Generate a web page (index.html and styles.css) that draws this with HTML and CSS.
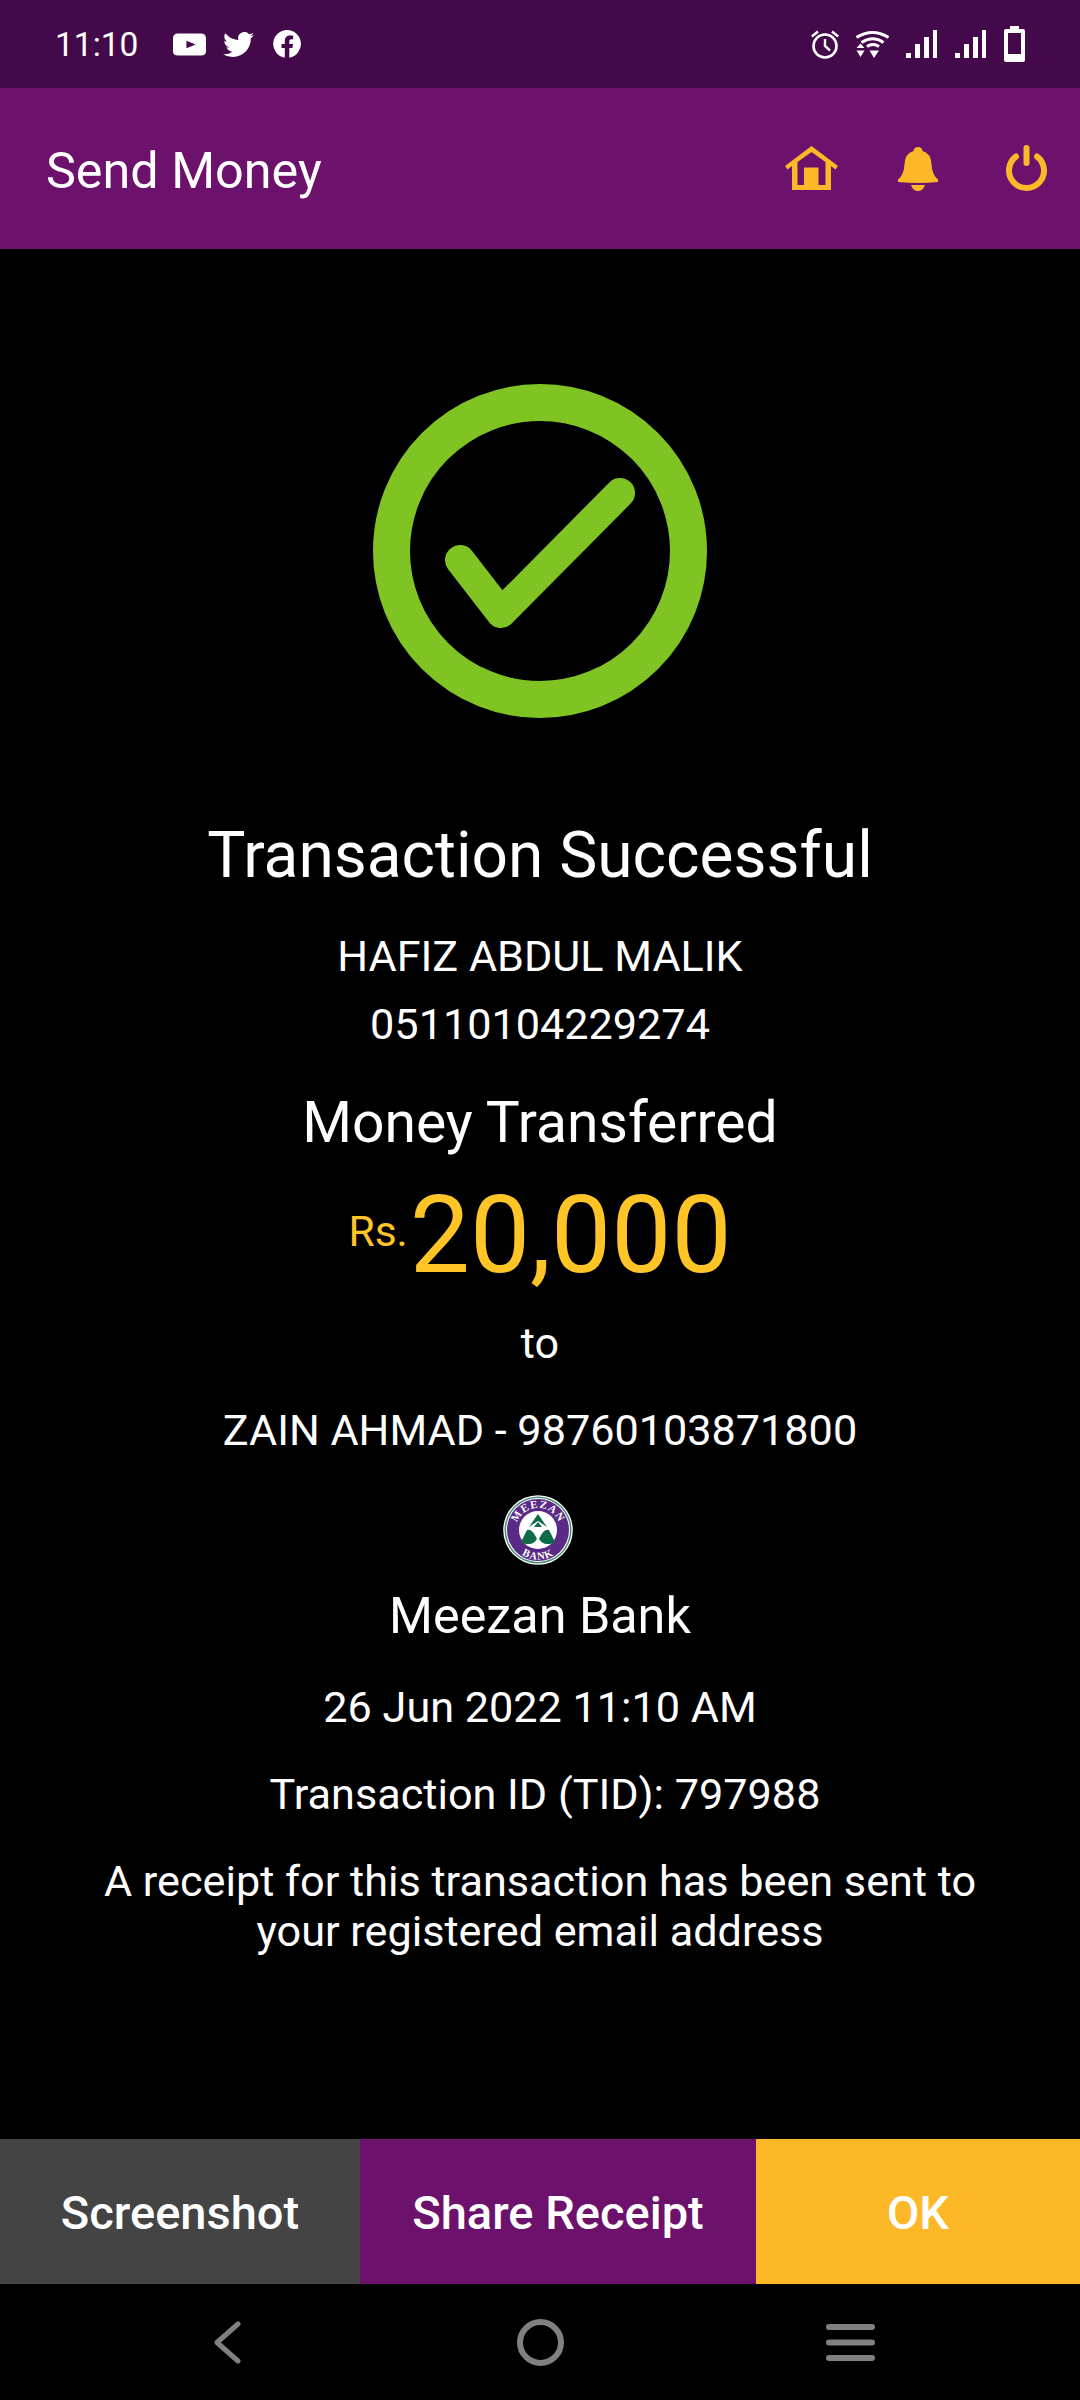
FILE: index.html
```html
<!DOCTYPE html>
<html lang="en">
<head>
<meta charset="utf-8">
<title>Send Money</title>
<link rel="stylesheet" href="styles.css">
</head>
<body>
<div class="phone">
  <header class="status">
    <div class="status-left">
      <span class="clock">11:10</span>
      <svg class="s-yt" viewBox="0 0 32 24" preserveAspectRatio="none"><path fill="#fff" d="M5 0.5H27Q32 0.5 32 5.5V19Q32 23.5 27 23.5H5Q0 23.5 0 19V5.5Q0 0.5 5 0.5Z"/><path fill="#43094a" d="M13 8L22 12L13 16Z"/></svg>
      <svg class="s-tw" viewBox="0 2.200 24 19.600" preserveAspectRatio="none"><path fill="#fff" d="M24 4.600c-.9.400-1.800.700-2.800.800 1-.600 1.800-1.600 2.200-2.700-1 .600-2 1-3.100 1.200A4.900 4.900 0 0 0 11.900 8.400C7.800 8.200 4.200 6.200 1.700 3.200c-1.300 2.300-.7 5.200 1.500 6.600-.8 0-1.600-.2-2.200-.6 0 2.400 1.700 4.400 3.900 4.900-.7.200-1.500.2-2.200.1.600 2 2.400 3.400 4.600 3.400A9.900 9.900 0 0 1 0 19.600 14 14 0 0 0 7.500 21.800c9.100 0 14.300-7.700 14-14.600 1-.7 1.800-1.600 2.500-2.600z"/></svg>
      <svg class="s-fb" viewBox="0 0 28 28"><path fill="#fff" d="M14 0a14 14 0 0 0-2.200 27.800V18H8.500v-4h3.300v-3c0-3.500 2.100-5.400 5.300-5.400 1.500 0 3.100.3 3.100.3v3.400h-1.700c-1.700 0-2.200 1-2.200 2.100V14h3.700l-.6 4h-3.100v9.800A14 14 0 0 0 14 0z"/></svg>
    </div>
    <div class="status-right">
      <svg class="s-alarm" viewBox="0 0 28 29"><circle cx="14" cy="16" r="11.500" fill="none" stroke="#fff" stroke-width="2.600"/><path fill="none" stroke="#fff" stroke-width="2.400" d="M14 9V16L19 20.500M0.800 6.500L7 1.500M27.200 6.500L21 1.500"/></svg>
      <svg class="s-wifi" viewBox="0 0 33 28"><path fill="none" stroke="#fff" stroke-width="3" d="M0.500 7.500Q16.500 -2.500 32.500 7.500M5.500 12.500Q17 5 27.500 12.500M11 16.500Q17 12.500 23 16.500"/><path fill="#fff" d="M13.500 20.500H23L18 28ZM0.500 18L4.500 13.500L8.500 18ZM0.500 20.500H8.500L4.500 27Z"/></svg>
      <svg class="s-sig" viewBox="0 0 31 28"><path fill="#fff" d="M0 23H5V28H0ZM9 14H14V28H9ZM18 7H23V28H18ZM27 0H31V28H27Z"/></svg>
      <svg class="s-sig s-sig-last" viewBox="0 0 31 28"><path fill="#fff" d="M0 23H5V28H0ZM9 14H14V28H9ZM18 7H23V28H18ZM27 0H31V28H27Z"/></svg>
      <svg class="s-bat" viewBox="0 0 21 36"><path fill="#fff" fill-rule="evenodd" d="M6 0H15V3H19Q21 3 21 5V34Q21 36 19 36H2Q0 36 0 34V5Q0 3 2 3H6ZM4 7V28H17V7Z"/></svg>
    </div>
  </header>

  <nav class="appbar">
    <h1 class="appbar-title">Send Money</h1>
    <div class="appbar-icons">
      <svg class="a-home" viewBox="0 0 53 45"><path fill="#fdb827" fill-rule="evenodd" d="M26.500 0L53 20L50.500 23.500L46 20V44H7V20L2.500 23.500L0 20ZM12.500 16V39H19V21.500H33.500V39H40.500V16L26.500 6Z"/></svg>
      <svg class="a-bell" viewBox="0 0 40 44"><path fill="#fdb827" d="M20 0Q24 0 24.500 4Q33 6.500 33.500 17Q34 28 40 32.500V35Q20 37 0 35V32.500Q6 28 6.500 17Q7 6.500 15.500 4Q16 0 20 0ZM13 38H27Q25 44 20 44Q15 44 13 38Z"/></svg>
      <svg class="a-power" viewBox="0 0 41 47"><path fill="none" stroke="#fdb827" stroke-width="6" stroke-linecap="round" d="M20.500 3V18M10 11.500A17.500 17.500 0 1 0 31 11.500"/></svg>
    </div>
  </nav>

  <main class="result">
    <svg class="tick" viewBox="0 0 334 334"><circle cx="167" cy="167" r="148.500" fill="none" stroke="#80c423" stroke-width="37"/><path fill="none" stroke="#80c423" stroke-width="30" stroke-linecap="round" stroke-linejoin="round" d="M87 176L128 229L247 109"/></svg>
    <h2 class="headline">Transaction Successful</h2>
    <p class="line sender">HAFIZ ABDUL MALIK</p>
    <p class="line account">05110104229274</p>
    <p class="subhead">Money Transferred</p>
    <div class="amount"><span class="currency">Rs.</span><span class="value">20,000</span></div>
    <p class="line to">to</p>
    <p class="line payee">ZAIN AHMAD - 98760103871800</p>
    <svg class="logo" viewBox="0 0 70 70">
      <defs>
        <path id="arc-top" d="M13 35A22 22 0 0 1 57 35"/>
        <path id="arc-bot" d="M5.500 35A29.500 29.500 0 0 0 64.500 35"/>
      </defs>
      <circle cx="35" cy="35" r="34.800" fill="#fff"/>
      <circle cx="35" cy="35" r="33.500" fill="#4b8f78"/>
      <circle cx="35" cy="35" r="32" fill="#fff"/>
      <circle cx="35" cy="35" r="31" fill="#5b2a86"/>
      <circle cx="35" cy="35" r="19" fill="#fff"/>
      <path fill="#0f6b47" d="M35 19L44 32Q39 28.500 35 26Q31 28.500 26 32ZM35 27L39 32H31Z M24 35Q29 33 34 44Q31 49 26 49Q20 49 18 47Z M46 35Q41 33 36 44Q39 49 44 49Q50 49 52 47Z"/>
      <text class="logo-text"><textPath href="#arc-top" startOffset="50%" text-anchor="middle">MEEZAN</textPath></text>
      <text class="logo-text logo-text-bot"><textPath href="#arc-bot" startOffset="50%" text-anchor="middle">BANK</textPath></text>
    </svg>
    <p class="bank">Meezan Bank</p>
    <p class="line date">26 Jun 2022 11:10 AM</p>
    <p class="line tid">Transaction ID (TID): 797988</p>
    <p class="line note">A receipt for this transaction has been sent to<br>your registered email address</p>
  </main>

  <div class="actions">
    <button class="btn btn-shot">Screenshot</button>
    <button class="btn btn-share">Share Receipt</button>
    <button class="btn btn-ok">OK</button>
  </div>

  <footer class="navbar">
    <svg class="n-back" viewBox="0 0 28 43"><path fill="none" stroke="#808080" stroke-width="5" stroke-linecap="round" stroke-linejoin="round" d="M25 3L4 21.500L25 40"/></svg>
    <svg class="n-home" viewBox="0 0 47 47"><circle cx="23.500" cy="23.500" r="20.500" fill="none" stroke="#808080" stroke-width="6"/></svg>
    <svg class="n-menu" viewBox="0 0 49 37"><path fill="#808080" d="M3 0H46Q49 0 49 3Q49 6 46 6H3Q0 6 0 3Q0 0 3 0ZM3 15.500H46Q49 15.500 49 18.500Q49 21.500 46 21.500H3Q0 21.500 0 18.500Q0 15.500 3 15.500ZM3 31H46Q49 31 49 34Q49 37 46 37H3Q0 37 0 34Q0 31 3 31Z"/></svg>
  </footer>
</div>
</body>
</html>
```
FILE: styles.css
```css
* { box-sizing: border-box; }
html, body { margin: 0; padding: 0; background: #000; }
body { font-family: Roboto, "Liberation Sans", sans-serif; color: #fff; }
p, h1, h2 { margin: 0; font-weight: 400; }

.phone { width: 1080px; height: 2400px; display: flex; flex-direction: column; overflow: hidden; background: #000; }

.status { height: 88px; flex: none; background: #43094a; display: flex; justify-content: space-between; align-items: center; padding: 0 55px; }
.status-left, .status-right { display: flex; align-items: center; }
.clock { font-size: 33.500px; line-height: 40px; width: 118px; margin-top: 2px; }
.s-yt { width: 33px; height: 23px; margin-right: 17px; }
.s-tw { width: 31px; height: 25px; margin-right: 19px; }
.s-fb { width: 28px; height: 28px; }
.s-alarm { width: 28px; height: 29px; margin-right: 17px; }
.s-wifi { width: 33px; height: 28px; margin-right: 17px; }
.s-sig { width: 31px; height: 28px; margin-right: 18px; }
.s-bat { width: 21px; height: 36px; }

.appbar { height: 161px; flex: none; background: #6c116c; display: flex; justify-content: space-between; align-items: center; padding: 0 33px 0 46px; }
.appbar-title { font-size: 50.300px; line-height: 60px; margin-top: 5px; }
.appbar-icons { display: flex; align-items: center; }
.a-home { width: 53px; height: 45px; margin-right: 60px; }
.a-bell { width: 40px; height: 44px; margin-right: 68px; }
.a-power { width: 41px; height: 47px; }

.result { flex: 1; display: flex; flex-direction: column; align-items: center; padding-top: 135px; text-align: center; }
.tick { width: 334px; height: 334px; flex: none; }
.headline { font-size: 64px; line-height: 72px; margin-top: 102px; }
.line { font-size: 43.200px; line-height: 50px; }
.sender { margin-top: 40px; }
.account { margin-top: 18px; }
.subhead { font-size: 57px; line-height: 64px; margin-top: 41px; }
.amount { display: flex; align-items: flex-start; color: #ffc425; margin-top: 26px; height: 110px; }
.currency { font-size: 42.500px; line-height: 50px; margin-top: 26px; margin-right: 2px; }
.value { font-size: 107px; line-height: 110px; }
.to { margin-top: 28px; }
.payee { margin-top: 37px; }
.logo { width: 70px; height: 70px; flex: none; margin: 39px 4px 0 0; }
.logo-text { font-family: "Liberation Serif", serif; font-size: 11px; font-weight: 700; letter-spacing: 1px; fill: #fff; }
.logo-text-bot { font-size: 10.500px; }
.bank { font-size: 50.300px; line-height: 60px; margin-top: 21px; }
.date { margin-top: 37px; }
.tid { margin: 37px 0 0 10px; }
.note { margin-top: 37px; }

.actions { height: 145px; flex: none; display: flex; }
.btn { border: 0; padding: 2px 0 0; color: #fff; font-family: Roboto, "Liberation Sans", sans-serif; font-size: 47px; font-weight: 500; }
.btn-shot { width: 360px; background: #444; }
.btn-share { width: 396px; background: #6c116c; }
.btn-ok { width: 324px; background: #fdb827; }

.navbar { height: 116px; flex: none; background: #000; display: flex; align-items: center; }
.n-back { width: 28px; height: 43px; margin-left: 213px; }
.n-home { width: 47px; height: 47px; margin-left: 276px; }
.n-menu { width: 49px; height: 37px; margin-left: 262px; }
```
